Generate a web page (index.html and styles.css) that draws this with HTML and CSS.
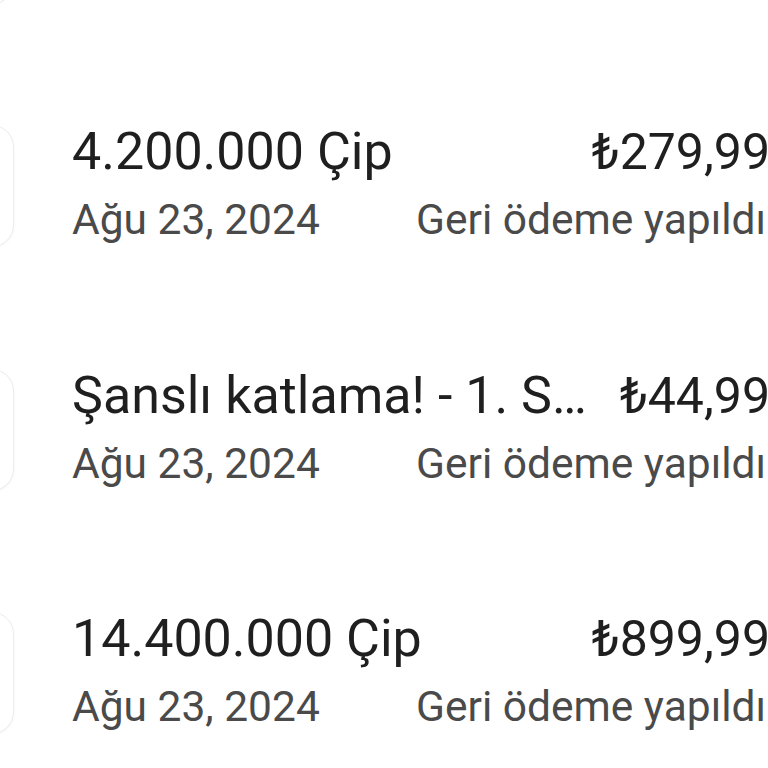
FILE: index.html
```html
<!DOCTYPE html>
<html lang="tr">
<head>
<meta charset="utf-8">
<title>Sipariş geçmişi</title>
<link rel="stylesheet" href="styles.css">
</head>
<body>
<div class="list">
  <div class="row">
    <div class="thumb"></div>
    <div class="info">
      <div class="title">2.100.000 Çip</div>
      <div class="date">Ağu 23, 2024</div>
    </div>
    <div class="meta">
      <div class="price">₺139,99</div>
      <div class="status">Geri ödeme yapıldı</div>
    </div>
  </div>
  <div class="row">
    <div class="thumb"></div>
    <div class="info">
      <div class="title">4.200.000 Çip</div>
      <div class="date">Ağu 23, 2024</div>
    </div>
    <div class="meta">
      <div class="price">₺279,99</div>
      <div class="status">Geri ödeme yapıldı</div>
    </div>
  </div>
  <div class="row">
    <div class="thumb"></div>
    <div class="info">
      <div class="title">Şanslı katlama! - 1. S…</div>
      <div class="date">Ağu 23, 2024</div>
    </div>
    <div class="meta">
      <div class="price">₺44,99</div>
      <div class="status">Geri ödeme yapıldı</div>
    </div>
  </div>
  <div class="row">
    <div class="thumb"></div>
    <div class="info">
      <div class="title">14.400.000 Çip</div>
      <div class="date">Ağu 23, 2024</div>
    </div>
    <div class="meta">
      <div class="price">₺899,99</div>
      <div class="status">Geri ödeme yapıldı</div>
    </div>
  </div>
</div>
</body>
</html>
```

FILE: styles.css
```css
html, body {
  margin: 0;
  padding: 0;
  background: #ffffff;
  overflow: hidden;
  width: 768px;
  height: 768px;
}

body {
  font-family: Roboto, "Noto Sans", sans-serif;
}

.list {
  margin-top: -179px;
  margin-left: -108px;
  width: 874px;
  display: flex;
  flex-direction: column;
}

.row {
  height: 243.5px;
  display: grid;
  grid-template-columns: 122px minmax(0, 1fr) auto;
  align-items: center;
}

.thumb {
  width: 122px;
  height: 122px;
  box-sizing: border-box;
  border: 1px solid #ececec;
  border-radius: 22px;
  background: #ffffff;
  box-shadow: 0 1px 3px rgba(0, 0, 0, 0.04);
}

.info {
  margin-left: 58px;
  padding-bottom: 4px;
  display: flex;
  flex-direction: column;
  gap: 14px;
  min-width: 0;
}

.meta {
  padding-bottom: 4px;
  display: flex;
  flex-direction: column;
  align-items: flex-end;
  gap: 14px;
  white-space: nowrap;
}

.title, .price {
  font-size: 52px;
  line-height: 58px;
  color: #1f1f1f;
  white-space: nowrap;
}

.price {
  font-size: 50px;
  margin-right: -4px;
}

.date, .status {
  font-size: 42.5px;
  line-height: 50px;
  color: #4a4a4a;
  white-space: nowrap;
}
```
